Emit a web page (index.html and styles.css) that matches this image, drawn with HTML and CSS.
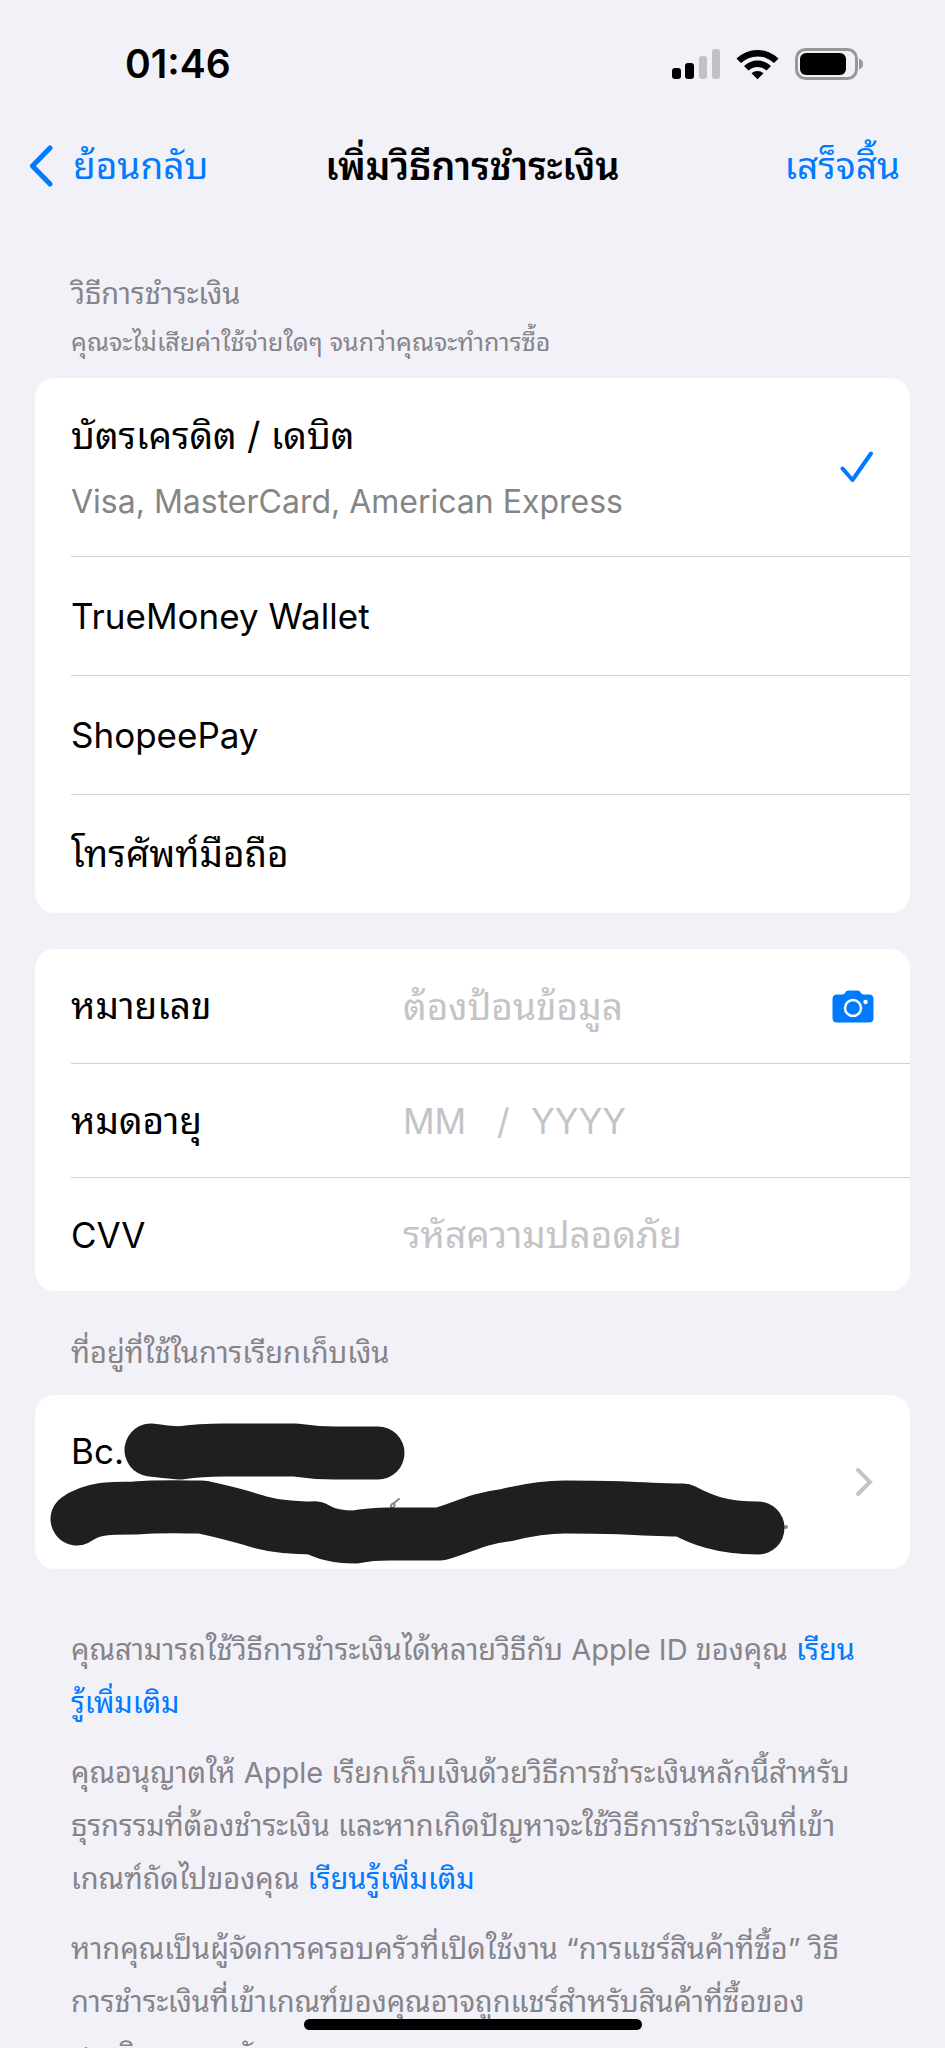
FILE: index.html
```html
<!DOCTYPE html>
<html lang="th">
<head>
<meta charset="utf-8">
<meta name="viewport" content="width=device-width, initial-scale=1">
<title>เพิ่มวิธีการชำระเงิน</title>
<link rel="stylesheet" href="styles.css">
</head>
<body>
<div class="status-bar">
  <time class="clock">01:46</time>
  <svg class="status-icons" viewBox="0 0 192 32" aria-hidden="true">
    <rect x="0" y="20" width="9" height="11" rx="3"/>
    <rect x="13" y="15" width="9" height="16" rx="3"/>
    <rect class="faint" x="27" y="8" width="8" height="23" rx="3"/>
    <rect class="faint" x="40" y="1" width="8" height="30" rx="3"/>
    <path d="M64.500 10.500A30 30 0 0 1 106.500 10.500L102 15A24 24 0 0 0 69 15Z"/>
    <path d="M72 18A19.500 19.500 0 0 1 99 18L94.500 22.500A13 13 0 0 0 76.500 22.500Z"/>
    <path d="M79.500 25.200A9 9 0 0 1 91.500 25.200L85.500 31.200Z"/>
    <rect class="shell" x="124.500" y="1.500" width="60" height="29" rx="9"/>
    <rect x="128" y="5" width="46" height="22" rx="6"/>
    <path class="nub" d="M187 11Q191 11.500 191 16T187 21Z"/>
  </svg>
</div>

<header class="nav">
  <button class="nav-button" type="button">
    <svg class="back-icon" viewBox="0 0 24 42" aria-hidden="true"><path d="M21 3L3.500 21L21 39"/></svg>
    <span>ย้อนกลับ</span>
  </button>
  <h1 class="nav-title">เพิ่มวิธีการชำระเงิน</h1>
  <button class="nav-button nav-done" type="button">เสร็จสิ้น</button>
</header>

<main class="content">
  <div class="section-head">
    <h2 class="section-title">วิธีการชำระเงิน</h2>
    <p class="section-note">คุณจะไม่เสียค่าใช้จ่ายใดๆ จนกว่าคุณจะทำการซื้อ</p>
  </div>

  <div class="card" role="radiogroup" aria-label="วิธีการชำระเงิน">
    <label class="method method-tall">
      <input class="method-radio" type="radio" name="method" checked>
      <span class="method-text">
        <span>บัตรเครดิต / เดบิต</span>
        <span class="method-detail">Visa, MasterCard, American Express</span>
      </span>
      <svg class="check-icon" viewBox="0 0 34 32" aria-hidden="true"><path d="M2.500 17.500L12.500 29L31 2.500"/></svg>
    </label>
    <label class="method">
      <input class="method-radio" type="radio" name="method">
      <span class="method-text latin">TrueMoney Wallet</span>
      <svg class="check-icon" viewBox="0 0 34 32" aria-hidden="true"><path d="M2.500 17.500L12.500 29L31 2.500"/></svg>
    </label>
    <label class="method">
      <input class="method-radio" type="radio" name="method">
      <span class="method-text latin">ShopeePay</span>
      <svg class="check-icon" viewBox="0 0 34 32" aria-hidden="true"><path d="M2.500 17.500L12.500 29L31 2.500"/></svg>
    </label>
    <label class="method">
      <input class="method-radio" type="radio" name="method">
      <span class="method-text">โทรศัพท์มือถือ</span>
      <svg class="check-icon" viewBox="0 0 34 32" aria-hidden="true"><path d="M2.500 17.500L12.500 29L31 2.500"/></svg>
    </label>
  </div>

  <form class="card card-form">
    <div class="field">
      <label class="field-label" for="number">หมายเลข</label>
      <input class="field-input" id="number" type="text" placeholder="ต้องป้อนข้อมูล">
      <button class="camera-button" type="button" aria-label="กล้อง">
        <svg class="camera-icon" viewBox="0 0 42 33" aria-hidden="true">
          <path d="M5 4.500H10Q12 4.500 13 3L14 1.500Q15 .5 17 .5H25Q27 .5 28 1.500L29 3Q30 4.500 32 4.500H37Q41.500 4.500 41.500 9V28Q41.500 32.500 37 32.500H5Q.5 32.500 .5 28V9Q.5 4.500 5 4.500Z"/>
          <circle class="lens" cx="21" cy="18" r="8"/>
          <circle class="flash" cx="33.500" cy="12" r="2.200"/>
        </svg>
      </button>
    </div>
    <div class="field">
      <label class="field-label" for="month">หมดอายุ</label>
      <div class="expiry latin">
        <input class="field-input expiry-month" id="month" type="text" placeholder="MM">
        <span class="slash">/</span>
        <input class="field-input expiry-year" type="text" placeholder="YYYY" aria-label="ปีที่หมดอายุ">
      </div>
    </div>
    <div class="field">
      <label class="field-label latin" for="cvv">CVV</label>
      <input class="field-input" id="cvv" type="text" placeholder="รหัสความปลอดภัย">
    </div>
  </form>

  <h2 class="section-title address-title">ที่อยู่ที่ใช้ในการเรียกเก็บเงิน</h2>
  <button class="card address" type="button">
    <span class="address-name latin">Bc.</span>
    <svg class="chevron-icon" viewBox="0 0 18 30" aria-hidden="true"><path d="M3 3L15 15L3 27"/></svg>
    <svg class="scribble" viewBox="0 0 875 174" aria-hidden="true">
      <path class="mark" d="M356 114Q355 109 359 108Q361 111 357 113M359 108L364 104"/>
      <circle class="dot" cx="751" cy="132" r="2"/>
      <path d="M116 55Q130 57 145 58Q165 55 190 55H260Q280 58 300 58H343"/>
      <path d="M42 124C57 113 75 113 100 113C125 111 150 112 167 112C190 117 205 121 218 125C235 131 255 133 280 133"/>
      <path d="M280 133Q295 142 320 142Q335 139 355 139H405C430 132 440 124 472 120C500 113 515 112 530 112C560 112 570 112 590 113C610 114 630 115 648 115C665 124 685 133 723 133"/>
    </svg>
  </button>

  <footer class="legal">
    <p>คุณสามารถใช้วิธีการชำระเงินได้หลายวิธีกับ Apple ID ของคุณ <a href="#">เรียน<br>รู้เพิ่มเติม</a></p>
    <p>คุณอนุญาตให้ Apple เรียกเก็บเงินด้วยวิธีการชำระเงินหลักนี้สำหรับ<br>ธุรกรรมที่ต้องชำระเงิน และหากเกิดปัญหาจะใช้วิธีการชำระเงินที่เข้า<br>เกณฑ์ถัดไปของคุณ <a href="#">เรียนรู้เพิ่มเติม</a></p>
    <p>หากคุณเป็นผู้จัดการครอบครัวที่เปิดใช้งาน “การแชร์สินค้าที่ซื้อ” วิธี<br>การชำระเงินที่เข้าเกณฑ์ของคุณอาจถูกแชร์สำหรับสินค้าที่ซื้อของ<br>สมาชิกครอบครัว</p>
  </footer>
</main>
<div class="home-indicator"></div>
</body>
</html>
```

FILE: styles.css
```css
* {
  box-sizing: border-box;
}

body {
  margin: 0;
  height: 100vh;
  overflow: hidden;
  display: flex;
  flex-direction: column;
  background: #f2f1f7;
  color: #000;
  font-family: Inter, "Noto Sans Thai Looped", "Noto Sans Thai", "Noto Sans", sans-serif;
  font-size: 37px;
  line-height: 48px;
}

h1, h2, p {
  margin: 0;
  font-weight: 400;
}

button, input {
  margin: 0;
  padding: 0;
  border: 0;
  background: none;
  color: inherit;
  font: inherit;
}

svg {
  display: block;
  flex: none;
}

.latin {
  font-size: 35px;
}

.status-bar {
  flex: none;
  display: flex;
  justify-content: space-between;
  align-items: center;
  height: 128px;
  padding: 0 81px 0 125px;
}

.clock {
  font-size: 39px;
  font-weight: 600;
}

.status-icons {
  width: 192px;
  height: 32px;
}

.faint {
  fill: #c2c1c6;
}

.shell {
  fill: none;
  stroke: #98979c;
  stroke-width: 3;
}

.nub {
  fill: #98979c;
}

.nav {
  flex: none;
  display: grid;
  grid-template-columns: 1fr auto 1fr;
  align-items: center;
  height: 76px;
  padding: 0 29px;
}

.nav-button {
  display: flex;
  align-items: center;
  gap: 20px;
  color: #007aff;
}

.nav-done {
  justify-self: end;
  padding-right: 16px;
}

.nav-title {
  font-size: 38px;
  font-weight: 600;
}

.back-icon {
  width: 24px;
  height: 42px;
  fill: none;
  stroke: #007aff;
  stroke-width: 5;
  stroke-linecap: round;
  stroke-linejoin: round;
}

.content {
  flex: 1;
  min-height: 0;
  padding: 66px 35px 0;
}

.section-head {
  height: 108px;
}

.section-title {
  padding: 0 36px;
  color: #85848a;
  font-size: 29px;
}

.section-note {
  padding: 0 36px;
  color: #85848a;
  font-size: 25px;
}

.card {
  border-radius: 20px;
  background: #fff;
}

.method {
  display: flex;
  align-items: center;
  min-height: 119px;
  margin-left: 36px;
  padding-right: 36px;
}

.method + .method,
.field + .field {
  border-top: 1px solid #d3d3d6;
}

.method-tall {
  min-height: 178px;
}

.method-radio {
  appearance: none;
  width: 0;
  height: 0;
}

.method-text {
  flex: 1;
  display: flex;
  flex-direction: column;
  gap: 18px;
}

.method-tall .method-text {
  padding-top: 4px;
}

.method-detail {
  color: #858585;
  font-size: 32px;
}

.check-icon {
  visibility: hidden;
  width: 34px;
  height: 32px;
  fill: none;
  stroke: #007aff;
  stroke-width: 4;
  stroke-linecap: round;
  stroke-linejoin: round;
}

.method-radio:checked ~ .check-icon {
  visibility: visible;
}

.card-form {
  margin-top: 36px;
}

.field {
  display: grid;
  grid-template-columns: 332px 1fr auto;
  align-items: center;
  min-height: 114px;
  margin-left: 36px;
  padding-right: 36px;
}

.field-input {
  width: 100%;
  height: 64px;
}

.field-input::placeholder {
  color: #c4c4c6;
  opacity: 1;
}

.expiry {
  display: flex;
  align-items: center;
}

.expiry-month {
  width: 94px;
}

.expiry-year {
  width: 120px;
}

.slash {
  width: 34px;
  color: #c4c4c6;
}

.camera-icon {
  width: 42px;
  height: 33px;
  fill: #007aff;
}

.lens {
  fill: none;
  stroke: #fff;
  stroke-width: 2.500;
}

.flash {
  fill: #fff;
}

.address-title {
  margin-top: 38px;
}

.address {
  position: relative;
  display: flex;
  justify-content: space-between;
  align-items: center;
  width: 100%;
  height: 174px;
  margin-top: 18px;
  padding: 0 37px 0 36px;
  text-align: left;
}

.address-name {
  align-self: flex-start;
  padding-top: 32px;
}

.chevron-icon {
  width: 18px;
  height: 30px;
  fill: none;
  stroke: #c4c4c6;
  stroke-width: 4;
  stroke-linecap: round;
}

.scribble {
  position: absolute;
  top: 0;
  left: 0;
  width: 875px;
  height: 174px;
  fill: none;
  stroke: #1f1f1f;
  stroke-width: 53;
  stroke-linecap: round;
  stroke-linejoin: round;
}

.mark {
  stroke: #858585;
  stroke-width: 2;
}

.dot {
  fill: #858585;
  stroke: none;
}

.legal {
  display: flex;
  flex-direction: column;
  gap: 17px;
  padding: 54px 36px 0;
  color: #85848a;
  font-size: 29px;
  line-height: 53px;
  white-space: nowrap;
}

.legal a {
  color: #007aff;
  text-decoration: none;
}

.home-indicator {
  position: fixed;
  bottom: 18px;
  left: 50%;
  width: 338px;
  height: 11px;
  margin-left: -169px;
  border-radius: 6px;
  background: #000;
}
```
